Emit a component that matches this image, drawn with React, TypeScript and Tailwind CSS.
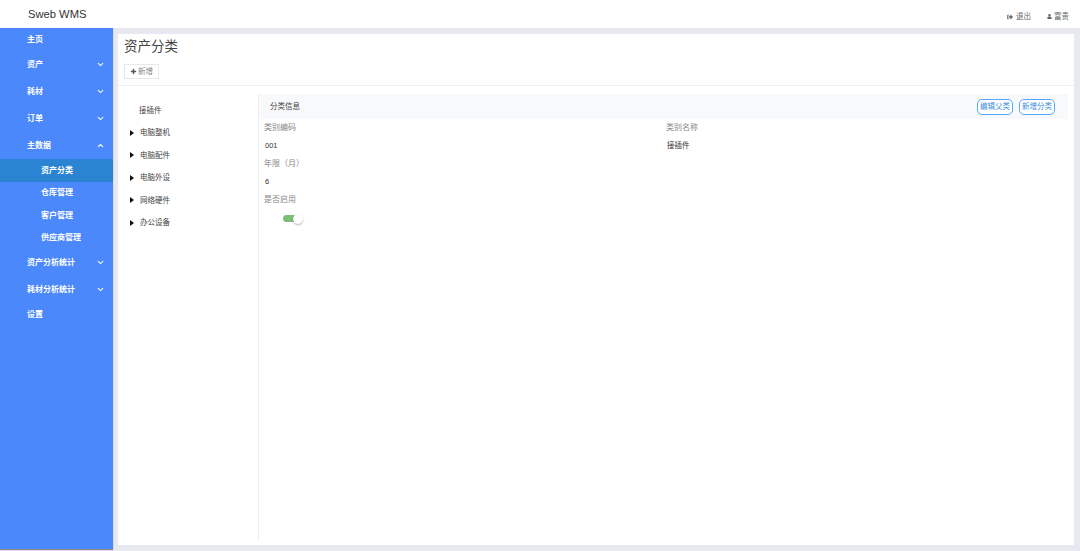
import { ChevronDown, ChevronUp, Plus } from "lucide-react";
import { FaUser, FaSignOutAlt } from "react-icons/fa";

const font = { fontFamily: '"Liberation Sans", "Noto Sans CJK SC", sans-serif' };

function NavItem({ label, arrow, height }: { label: string; arrow?: "up" | "down"; height: string }) {
  return (
    <div className={`flex items-center justify-between pl-[27px] pr-[8px] text-[8px] font-bold text-white ${height}`}>
      <span>{label}</span>
      {arrow === "down" && <ChevronDown size={9} strokeWidth={3.5} className="text-[#e6eeff]" />}
      {arrow === "up" && <ChevronUp size={9} strokeWidth={3.5} className="text-[#e6eeff]" />}
    </div>
  );
}

function SubItem({ label, active }: { label: string; active?: boolean }) {
  return (
    <div className={`flex h-[22.5px] items-center pl-[41px] pt-[1px] text-[8px] font-bold text-white ${active ? "bg-[#2a84d2]" : ""}`}>
      {label}
    </div>
  );
}

function TreeItem({ label }: { label: string }) {
  return (
    <div className="flex h-[22.5px] items-center text-[7.5px] text-[#444]">
      <span className="mr-[6px] h-0 w-0 border-y-[3px] border-l-[4px] border-y-transparent border-l-[#111]" />
      {label}
    </div>
  );
}

function Field({ label, value }: { label: string; value: string }) {
  return (
    <div>
      <div className="flex h-[18px] items-center text-[8px] text-[#888]">{label}</div>
      <div className="flex h-[18px] items-center pl-[1px] text-[7.5px] text-[#333]">{value}</div>
    </div>
  );
}

export default function App() {
  return (
    <div className="flex h-[551px] w-[1080px] flex-col overflow-hidden bg-[#e8e8f0]" style={font}>
      <header className="flex h-[28px] shrink-0 items-center justify-between bg-white pl-[28px] pr-[11px]">
        <span className="text-[11.2px] text-[#333]">Sweb WMS</span>
        <div className="flex items-center gap-[16px] pt-[5px] text-[7.5px] text-[#666]">
          <span className="flex items-center gap-[3px]">
            <FaSignOutAlt size={6} />
            退出
          </span>
          <span className="flex items-center gap-[2px]">
            <FaUser size={5} />
            富贵
          </span>
        </div>
      </header>

      <div className="flex min-h-0 flex-1">
        <aside className="mb-[2px] w-[113px] shrink-0 bg-[#4a88fb] shadow-[0_1px_1px_rgba(0,0,0,0.4)]">
          <NavItem label="主页" height="h-[23px]" />
          <NavItem label="资产" arrow="down" height="h-[27px]" />
          <NavItem label="耗材" arrow="down" height="h-[27px]" />
          <NavItem label="订单" arrow="down" height="h-[27px]" />
          <NavItem label="主数据" arrow="up" height="h-[27px]" />
          <SubItem label="资产分类" active />
          <SubItem label="仓库管理" />
          <SubItem label="客户管理" />
          <SubItem label="供应商管理" />
          <NavItem label="资产分析统计" arrow="down" height="h-[27px]" />
          <NavItem label="耗材分析统计" arrow="down" height="h-[27px]" />
          <NavItem label="设置" height="h-[23px]" />
        </aside>

        <main className="flex min-w-0 flex-1 pb-[6px] pl-[5px] pr-[6px] pt-[6px]">
          <div className="flex min-w-0 flex-1 flex-col bg-white">
            <div className="h-[52px] shrink-0 border-b border-[#eee] px-[6px]">
              <h1 className="pt-[4px] text-[13.5px] leading-[18px] text-[#444]">资产分类</h1>
              <button className="mt-[8px] flex h-[15px] w-[35px] items-center justify-center gap-[1px] border border-[#e8e8e8] text-[7.5px] text-[#888]">
                <Plus size={7} strokeWidth={5} className="text-[#555]" />
                新增
              </button>
            </div>

            <div className="flex min-h-0 flex-1 pb-[5px] pt-[8px]">
              <div className="w-[141px] shrink-0 border-r border-[#eee] pl-[12px] pt-[5px]">
                <div className="flex h-[22.5px] items-center pl-[9px] text-[7.5px] text-[#444]">接插件</div>
                <TreeItem label="电脑整机" />
                <TreeItem label="电脑配件" />
                <TreeItem label="电脑外设" />
                <TreeItem label="网络硬件" />
                <TreeItem label="办公设备" />
              </div>

              <div className="min-w-0 flex-1 pr-[6px]">
                <div className="flex h-[25px] items-center justify-between bg-[#f8f9fb] pl-[11px] pr-[13px]">
                  <span className="text-[7.5px] text-[#444]">分类信息</span>
                  <div className="flex gap-[6px]">
                    <button className="h-[16px] w-[36px] rounded-[5px] border border-[#57a5ff] bg-white text-[7.5px] text-[#3d8fe0]">编辑父类</button>
                    <button className="h-[16px] w-[36px] rounded-[5px] border border-[#57a5ff] bg-white text-[7.5px] text-[#3d8fe0]">新增分类</button>
                  </div>
                </div>

                <div className="pl-[5px]">
                  <div className="grid grid-cols-2">
                    <Field label="类别编码" value="001" />
                    <Field label="类别名称" value="接插件" />
                  </div>
                  <Field label="年限（月）" value="6" />
                  <div className="flex h-[18px] items-center text-[8px] text-[#888]">是否启用</div>
                  <div className="relative ml-[19px] mt-[6px] h-[7px] w-[21px]">
                    <div className="h-[7px] w-[15px] rounded-full bg-[#7dbd7a]" />
                    <div className="absolute left-[10px] top-[-1px] h-[10px] w-[10px] rounded-full bg-white shadow-[0_1px_2px_rgba(0,0,0,0.3)]" />
                  </div>
                </div>
              </div>
            </div>
          </div>
        </main>
      </div>
    </div>
  );
}
